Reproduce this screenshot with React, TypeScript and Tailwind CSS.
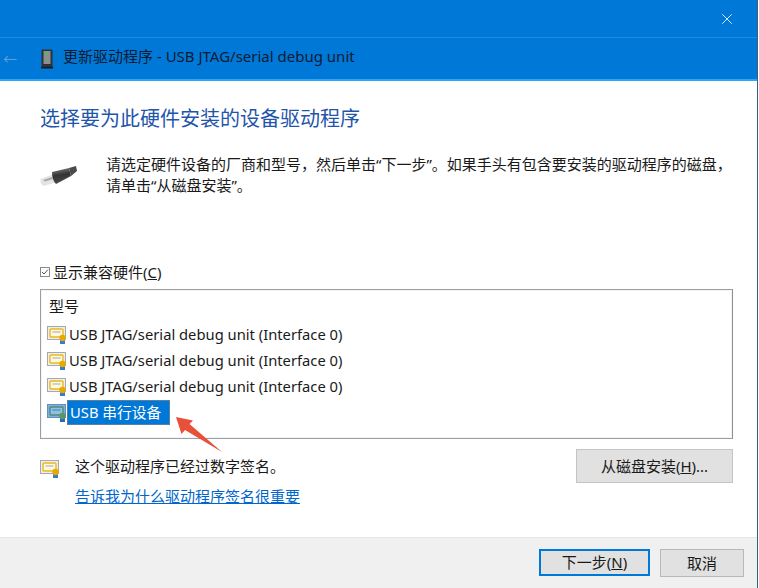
import { X } from 'lucide-react';

const font = { fontFamily: '"Noto Sans", "Noto Sans CJK SC", sans-serif' };

function DeviceIcon() {
  return (
    <svg width="14" height="20" viewBox="0 0 14 20">
      <rect x="1.5" y="0.5" width="11" height="17" rx="1" fill="#2f3234" />
      <rect x="3.5" y="2" width="7" height="13" fill="#8b8f92" />
      <rect x="6" y="3.5" width="2" height="2.5" fill="#35d040" />
      <rect x="1" y="17.5" width="12" height="2" fill="#17191a" />
    </svg>
  );
}

function UsbIcon() {
  return (
    <svg width="38" height="24" viewBox="0 0 38 24">
      <defs>
        <linearGradient id="plug" x1="0" y1="0" x2="0.2" y2="1">
          <stop offset="0" stopColor="#8a8a8a" />
          <stop offset="0.5" stopColor="#333" />
          <stop offset="1" stopColor="#4a4a4a" />
        </linearGradient>
      </defs>
      <path d="M0.5 14 L14 9 L17 17 L4 21 Q0 20 0.5 14Z" fill="#e4e4e4" />
      <path d="M3 15 L12 12 L13 14 L5 16.5Z" fill="#a8a8a8" />
      <path d="M12 7 L29 3 L31 11 L16 19 Q12 15 12 7Z" fill="url(#plug)" />
      <path d="M29 3 L36 1 L37 6 L31 11Z" fill="#4a4a4a" />
    </svg>
  );
}

function CertIcon() {
  return (
    <svg width="20" height="20" viewBox="0 0 20 20">
      <rect x="0.5" y="1.5" width="18" height="13" fill="#eeeeee" stroke="#a8a8a8" />
      <rect x="3" y="4" width="13" height="8" rx="1" fill="#fff8dc" stroke="#e8b923" strokeWidth="1.4" />
      <path d="M5.5 7h8" stroke="#a8a8a8" strokeWidth="1" />
      <rect x="13" y="15" width="5" height="4" fill="#2f7fd0" />
      <circle cx="15.5" cy="13" r="3.2" fill="#e9a900" />
    </svg>
  );
}

function CertIconSelected() {
  return (
    <svg width="20" height="20" viewBox="0 0 20 20">
      <rect x="0.5" y="1.5" width="18" height="13" fill="#7fb0d8" stroke="#5f93bf" />
      <rect x="3" y="4" width="13" height="8" rx="1" fill="#8ec0e0" stroke="#4e8a84" strokeWidth="1.4" />
      <path d="M5.5 7h8" stroke="#4a7ea8" strokeWidth="1" />
      <rect x="13" y="15" width="5" height="4" fill="#1f6fc0" />
      <circle cx="15.5" cy="13" r="3.2" fill="#5f9560" />
    </svg>
  );
}

function ModelRow({ label }: { label: string }) {
  return (
    <div className="flex items-center h-[26px]">
      <span className="flex mt-[2px]">
        <CertIcon />
      </span>
      <span className="ml-[2px] text-[14.75px] text-[#1a1a1a] whitespace-nowrap">{label}</span>
    </div>
  );
}

export default function App() {
  return (
    <div className="w-[759px] h-[588px] bg-white overflow-hidden relative" style={font}>
      <div className="w-[758px] h-full flex flex-col border-r border-[#3a5f80]">
        {/* title bar */}
        <div className="h-[37px] shrink-0 bg-[#0078d7] flex justify-end items-center pr-[21px]">
          <X className="w-[18px] h-[18px] text-white" strokeWidth={1.1} />
        </div>
        <div className="h-[44px] shrink-0 bg-[#0078d7] border-t border-[#1c8ae6] border-b-2 border-b-[#2ea5f5] flex items-center text-[#0d1c33]">
          <span className="w-[40px] pl-[3px] text-[#5e9fd8] text-[14px] leading-none">←</span>
          <DeviceIcon />
          <span className="ml-[9px] mt-[-4px] text-[15px] whitespace-nowrap">更新驱动程序 - USB JTAG/serial debug unit</span>
        </div>

        {/* content */}
        <div className="flex-1 pl-[40px] pr-[24px] pt-[23px] flex flex-col">
          <h1 className="text-[20px] leading-[30px] text-[#1f55aa] whitespace-nowrap">选择要为此硬件安装的设备驱动程序</h1>
          <div className="flex mt-[20px]">
            <div className="w-[66px] shrink-0 pt-[11px]">
              <UsbIcon />
            </div>
            <p className="text-[15px] leading-[21px] text-[#1a1a1a] w-[630px]">
              请选定硬件设备的厂商和型号，然后单击“下一步”。如果手头有包含要安装的驱动程序的磁盘，
              <br />
              请单击“从磁盘安装”。
            </p>
          </div>

          <label className="flex items-center mt-[66px] h-[20px] text-[15px] text-[#1a1a1a]">
            <span className="w-[10px] h-[10px] border border-[#8a8a8a] flex items-center justify-center">
              <svg width="8" height="8" viewBox="0 0 8 8">
                <path d="M1 4l2 2 4-4.5" fill="none" stroke="#555" strokeWidth="1" />
              </svg>
            </span>
            <span className="ml-[3px]">
              显示兼容硬件(<span className="underline">C</span>)
            </span>
          </label>

          <div className="mt-[7px] w-[693px] h-[150px] border border-[#9a9fa6] border-r-[#8a8f96] pl-[6px] pt-[4px] shadow-[inset_0_0_0_1px_#f4f4f4]">
            <div className="h-[26px] pl-[2px] text-[15px] leading-[24px] text-[#1a1a1a]">型号</div>
            <div className="mt-[1px]">
              <ModelRow label="USB JTAG/serial debug unit (Interface 0)" />
              <ModelRow label="USB JTAG/serial debug unit (Interface 0)" />
              <ModelRow label="USB JTAG/serial debug unit (Interface 0)" />
              <div className="flex items-center h-[26px]">
                <span className="flex mt-[2px]">
                  <CertIconSelected />
                </span>
                <span className="h-[25px] pl-[2px] bg-[#0078d7] text-white text-[14.75px] leading-[23px] whitespace-nowrap border border-[#5a7f9f] w-[103px]">
                  USB 串行设备
                </span>
              </div>
            </div>
          </div>

          <div className="flex w-[693px] mt-[10px]">
            <div className="flex-1">
              <div className="flex items-center h-[34px]">
                <span className="mt-[6px] flex">
                  <CertIcon />
                </span>
                <span className="ml-[15px] text-[15px] text-[#1a1a1a]">这个驱动程序已经过数字签名。</span>
              </div>
              <a className="block ml-[35px] mt-[1px] text-[15px] leading-[24px] text-[#0066cc] underline">告诉我为什么驱动程序签名很重要</a>
            </div>
            <button className="w-[157px] h-[34px] bg-[#e1e1e1] border border-[#c4c4c4] text-[15px] text-[#1a1a1a]">
              从磁盘安装(<span className="underline">H</span>)...
            </button>
          </div>
        </div>

        {/* footer */}
        <div className="h-[51px] shrink-0 bg-[#f0f0f0] border-t border-[#e6e6e6] flex justify-end items-start pt-[11px] pr-[13px] gap-[10px]">
          <button className="w-[111px] h-[27px] bg-[#e1e1e1] border-2 border-[#0078d7] text-[15px] leading-none text-[#1a1a1a]">
            下一步(<span className="underline">N</span>)
          </button>
          <button className="w-[84px] h-[28px] bg-[#e1e1e1] border border-[#b8b8b8] text-[15px] leading-none text-[#1a1a1a]">取消</button>
        </div>
      </div>

      {/* red annotation arrow */}
      <svg className="absolute left-[170px] top-[411px]" width="60" height="45" viewBox="0 0 60 45">
        <path d="M6 6 L23 9.5 L19.5 13 L52 41 L15 19 L11.5 23Z" fill="#e8503a" />
      </svg>
    </div>
  );
}
